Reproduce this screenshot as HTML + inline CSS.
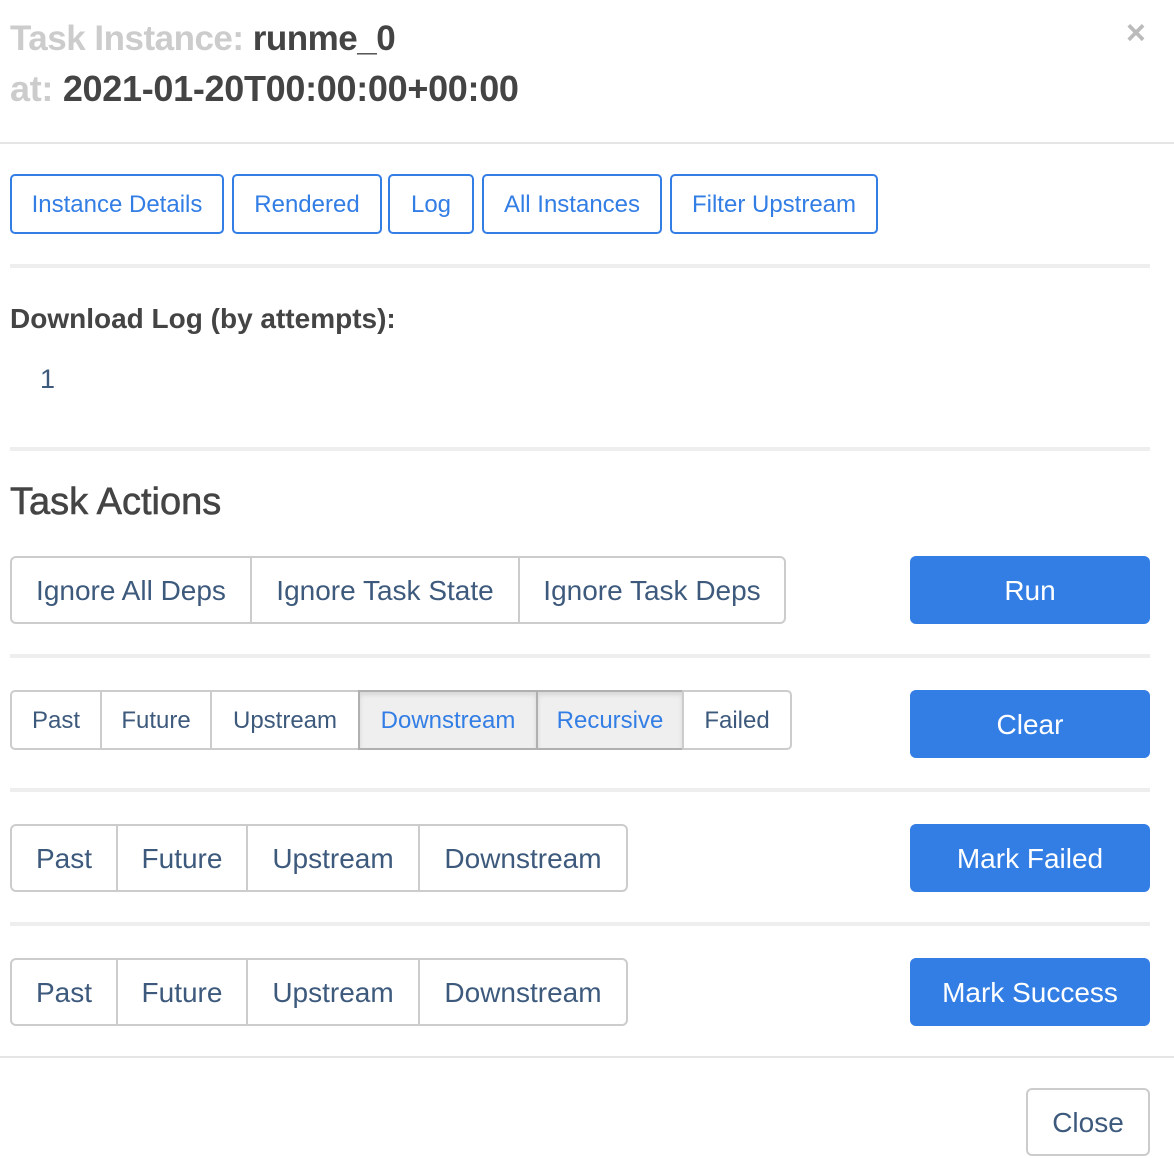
<!DOCTYPE html>
<html><head><meta charset="utf-8"><style>
*{box-sizing:border-box;margin:0;padding:0}
body{width:1174px;height:1176px;background:#fff;font-family:"Liberation Sans",Arial,sans-serif;position:relative;overflow:hidden}
.a{position:absolute}
.hr{position:absolute;left:10px;width:1140px;height:4px;background:#eee}
.b{position:absolute;display:flex;align-items:center;justify-content:center;white-space:nowrap;padding-top:1px}
.nav{border:2px solid #337ee5;border-radius:5px;color:#337ee5;font-size:24px;top:174px;height:60px}
.g{border:2px solid #ccc;color:#3d5a7d;background:#fff}
.pri{background:#337ee5;color:#fff;border-radius:6px;font-size:28px;left:910px;width:240px;height:68px}
.act{background:#efefef;color:#337ee5;border-color:#b0b0b0;box-shadow:inset 0 3px 5px rgba(0,0,0,.1)}
.f24{font-size:24px}.f28{font-size:28px}
</style></head><body>
<div class="a" style="left:10px;top:19px;font-size:35px;font-weight:bold;color:#ccc;letter-spacing:-0.5px">Task Instance: <span style="color:#444">runme_0</span></div>
<div class="a" style="left:10px;top:68px;font-size:36px;font-weight:bold;color:#ccc;letter-spacing:-0.3px">at: <span style="color:#444">2021-01-20T00:00:00+00:00</span></div>
<div class="a" style="left:1126px;top:14px;font-size:34px;font-weight:bold;color:#bbb">×</div>
<div class="a" style="left:0;top:142px;width:1174px;height:2px;background:#e5e5e5"></div>

<div class="b nav" style="left:10px;width:214px">Instance Details</div>
<div class="b nav" style="left:232px;width:150px">Rendered</div>
<div class="b nav" style="left:388px;width:86px">Log</div>
<div class="b nav" style="left:482px;width:180px">All Instances</div>
<div class="b nav" style="left:670px;width:208px">Filter Upstream</div>

<div class="hr" style="top:264px"></div>
<div class="a" style="left:10px;top:303px;font-size:28px;font-weight:bold;color:#444">Download Log (by attempts):</div>
<div class="a" style="left:40px;top:364px;font-size:27px;color:#3d5a7d">1</div>
<div class="hr" style="top:447px"></div>
<div class="a" style="left:10px;top:481px;font-size:38px;color:#444;-webkit-text-stroke:0.6px #444">Task Actions</div>

<div class="b g f28" style="left:10px;top:556px;width:242px;height:68px;border-radius:6px 0 0 6px">Ignore All Deps</div>
<div class="b g f28" style="left:250px;top:556px;width:270px;height:68px">Ignore Task State</div>
<div class="b g f28" style="left:518px;top:556px;width:268px;height:68px;border-radius:0 6px 6px 0">Ignore Task Deps</div>
<div class="b pri" style="top:556px">Run</div>
<div class="hr" style="top:654px"></div>

<div class="b g f24" style="left:10px;top:690px;width:92px;height:60px;border-radius:5px 0 0 5px">Past</div>
<div class="b g f24" style="left:100px;top:690px;width:112px;height:60px">Future</div>
<div class="b g f24" style="left:210px;top:690px;width:150px;height:60px">Upstream</div>
<div class="b g act f24" style="left:358px;top:690px;width:180px;height:60px">Downstream</div>
<div class="b g act f24" style="left:536px;top:690px;width:148px;height:60px">Recursive</div>
<div class="b g f24" style="left:682px;top:690px;width:110px;height:60px;border-radius:0 5px 5px 0">Failed</div>
<div class="b pri" style="top:690px">Clear</div>
<div class="hr" style="top:788px"></div>

<div class="b g f28" style="left:10px;top:824px;width:108px;height:68px;border-radius:6px 0 0 6px">Past</div>
<div class="b g f28" style="left:116px;top:824px;width:132px;height:68px">Future</div>
<div class="b g f28" style="left:246px;top:824px;width:174px;height:68px">Upstream</div>
<div class="b g f28" style="left:418px;top:824px;width:210px;height:68px;border-radius:0 6px 6px 0">Downstream</div>
<div class="b pri" style="top:824px">Mark Failed</div>
<div class="hr" style="top:922px"></div>

<div class="b g f28" style="left:10px;top:958px;width:108px;height:68px;border-radius:6px 0 0 6px">Past</div>
<div class="b g f28" style="left:116px;top:958px;width:132px;height:68px">Future</div>
<div class="b g f28" style="left:246px;top:958px;width:174px;height:68px">Upstream</div>
<div class="b g f28" style="left:418px;top:958px;width:210px;height:68px;border-radius:0 6px 6px 0">Downstream</div>
<div class="b pri" style="top:958px">Mark Success</div>

<div class="a" style="left:0;top:1056px;width:1174px;height:2px;background:#e5e5e5"></div>
<div class="b g f28" style="left:1026px;top:1088px;width:124px;height:68px;border-radius:6px">Close</div>
</body></html>
